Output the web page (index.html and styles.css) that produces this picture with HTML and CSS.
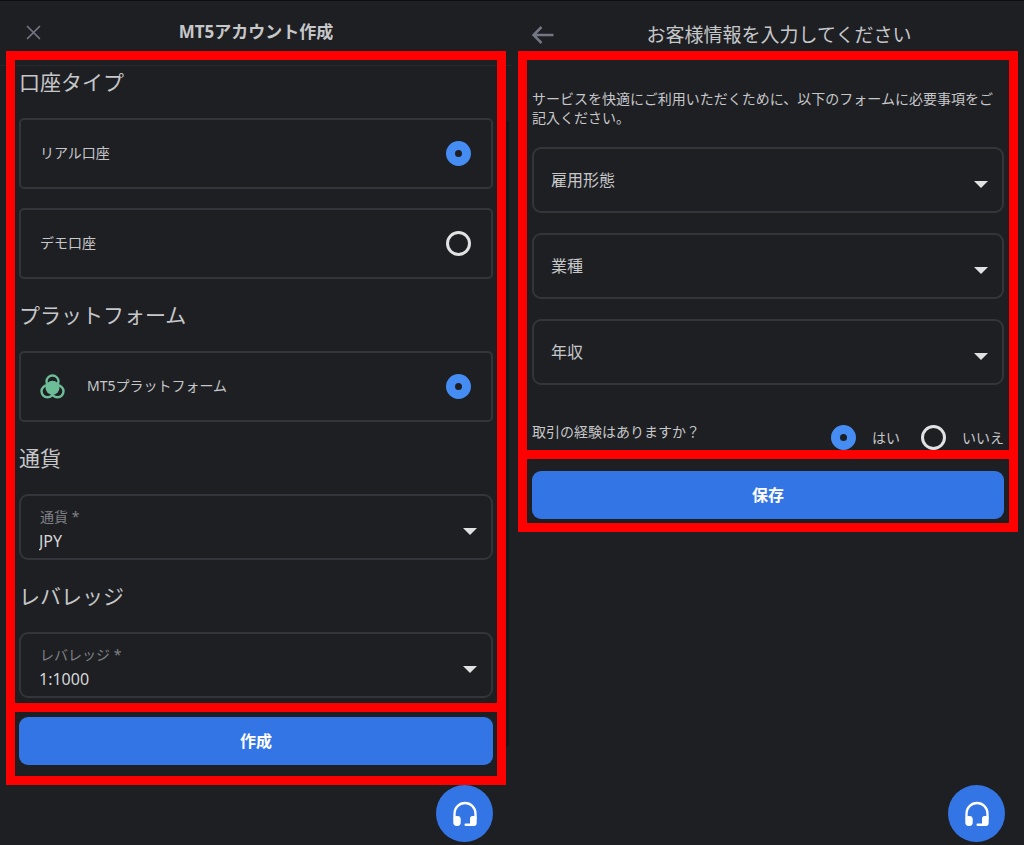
FILE: index.html
```html
<!DOCTYPE html>
<html lang="ja">
<head>
    <meta charset="UTF-8">
    <meta name="viewport" content="width=device-width, initial-scale=1.0">
    <title>MT5アカウント作成</title>
    <link rel="stylesheet" href="styles.css">
</head>
<body>
    <main class="screens">
        <!-- Account screen -->
        <section class="screen screen-account">
            <header class="screen-header header-account">
                <button type="button" class="icon-button" aria-label="閉じる">
                    <svg width="15" height="15" viewBox="0 0 15 15"><path d="M1.5 1.5L13.5 13.5M13.5 1.5L1.5 13.5" fill="none" stroke="#737684" stroke-width="1.7" stroke-linecap="round"/></svg>
                </button>
                <h1>MT5アカウント作成</h1>
            </header>

            <form>
                <div class="frame account-fields">
                    <h2>口座タイプ</h2>
                    <div class="card-list">
                        <label class="card">
                            <span>リアル口座</span>
                            <input type="radio" class="radio" name="account_type" value="real" checked>
                        </label>
                        <label class="card">
                            <span>デモ口座</span>
                            <input type="radio" class="radio" name="account_type" value="demo">
                        </label>
                    </div>

                    <h2>プラットフォーム</h2>
                    <label class="card">
                        <svg class="platform-icon" width="25" height="25" viewBox="0 0 25 25">
                            <g fill="none" stroke="#6dbd98" stroke-width="2.4">
                                <circle cx="12.5" cy="7.5" r="6"/>
                                <circle cx="7.5" cy="17.3" r="6"/>
                                <circle cx="17.5" cy="17.3" r="6"/>
                            </g>
                            <circle cx="12.5" cy="13.8" r="7" fill="#6dbd98"/>
                        </svg>
                        <span>MT5プラットフォーム</span>
                        <input type="radio" class="radio" name="platform" value="mt5" checked>
                    </label>

                    <h2>通貨</h2>
                    <div class="field field-filled">
                        <label for="currency">通貨 *</label>
                        <select id="currency" name="currency" required>
                            <option>JPY</option>
                        </select>
                    </div>

                    <h2>レバレッジ</h2>
                    <div class="field field-filled">
                        <label for="leverage">レバレッジ *</label>
                        <select id="leverage" name="leverage" required>
                            <option>1:1000</option>
                        </select>
                    </div>
                </div>
                <div class="frame frame-submit account-submit">
                    <button type="submit" class="submit-button">作成</button>
                </div>
            </form>

            <button type="button" class="support-button" aria-label="サポート">
                <svg width="26" height="26" viewBox="0 0 26 26">
                    <path d="M2.5 18V12.5a10.5 10.5 0 0 1 21 0V18" fill="none" stroke="#fff" stroke-width="2.3"/>
                    <rect x="1.3" y="15" width="7.4" height="10" rx="3.4" fill="#fff"/>
                    <path d="M20.5 15H23a1.7 1.7 0 0 1 1.7 2v5a3 3 0 0 1-3 3h-8a1 1 0 0 1 0-2.4H18V17.5a2.5 2.5 0 0 1 2.5-2.5z" fill="#fff"/>
                </svg>
            </button>
        </section>

        <!-- Customer information screen -->
        <section class="screen">
            <header class="screen-header header-profile">
                <button type="button" class="icon-button" aria-label="戻る">
                    <svg width="22" height="18" viewBox="0 0 22 18"><path d="M21.5 9H1.5M9.5 1L1.5 9L9.5 17" fill="none" stroke="#737684" stroke-width="2.5"/></svg>
                </button>
                <h1>お客様情報を入力してください</h1>
            </header>

            <form>
                <div class="frame profile-fields">
                    <p class="intro">サービスを快適にご利用いただくために、以下のフォームに必要事項をご記入ください。</p>
                    <div class="field-list">
                        <div class="field">
                            <label for="employment">雇用形態</label>
                            <select id="employment" name="employment">
                                <option value=""></option>
                            </select>
                        </div>
                        <div class="field">
                            <label for="industry">業種</label>
                            <select id="industry" name="industry">
                                <option value=""></option>
                            </select>
                        </div>
                        <div class="field">
                            <label for="income">年収</label>
                            <select id="income" name="income">
                                <option value=""></option>
                            </select>
                        </div>
                    </div>
                    <div class="question" role="radiogroup" aria-labelledby="experience-label">
                        <span id="experience-label">取引の経験はありますか？</span>
                        <div class="answers">
                            <label><input type="radio" class="radio" name="experience" value="yes" checked>はい</label>
                            <label><input type="radio" class="radio" name="experience" value="no">いいえ</label>
                        </div>
                    </div>
                </div>
                <div class="frame frame-submit profile-submit">
                    <button type="submit" class="submit-button">保存</button>
                </div>
            </form>

            <button type="button" class="support-button" aria-label="サポート">
                <svg width="26" height="26" viewBox="0 0 26 26">
                    <path d="M2.5 18V12.5a10.5 10.5 0 0 1 21 0V18" fill="none" stroke="#fff" stroke-width="2.3"/>
                    <rect x="1.3" y="15" width="7.4" height="10" rx="3.4" fill="#fff"/>
                    <path d="M20.5 15H23a1.7 1.7 0 0 1 1.7 2v5a3 3 0 0 1-3 3h-8a1 1 0 0 1 0-2.4H18V17.5a2.5 2.5 0 0 1 2.5-2.5z" fill="#fff"/>
                </svg>
            </button>
        </section>
    </main>
</body>
</html>
```

FILE: styles.css
```css
/* Global Styles */
* {
    box-sizing: border-box;
    margin: 0;
    padding: 0;
}

body {
    font-family: "Noto Sans", "Noto Sans CJK JP", sans-serif;
    font-size: 14px;
    background-color: #1e1f23;
    color: #c6c7c9;
}

button,
select {
    font-family: inherit;
    border: none;
    cursor: pointer;
}

.screens {
    display: grid;
    grid-template-columns: 1fr 1fr;
    min-height: 100vh;
    box-shadow: inset 0 1px #0c0d10;
}

.screen {
    display: flex;
    flex-direction: column;
    position: relative;
}

/* Scrollbar track */
.screen-account::after {
    content: "";
    position: absolute;
    top: 121px;
    bottom: 99px;
    right: 3px;
    width: 3px;
    background-color: #17181b;
}

/* Header Styles */
.screen-header {
    height: 66px;
    line-height: 24px;
}

.header-account {
    display: grid;
    grid-template-columns: 1fr auto 1fr;
    align-items: start;
    padding: 20px 26px 0;
    border-bottom: 1px solid #27282c;
}

.header-account h1 {
    font-size: 17px;
    font-weight: 700;
}

.header-profile {
    display: flex;
    align-items: flex-start;
    padding: 23px 20px 0;
}

.header-profile h1 {
    flex: 1;
    font-size: 19px;
    font-weight: 400;
    text-align: center;
}

.icon-button {
    display: flex;
    align-items: center;
    justify-self: start;
    height: 24px;
    background: none;
}

/* Red frames */
.frame {
    position: relative;
    margin: 0 6px;
    border: 9px solid #ff0000;
}

.account-fields {
    margin-top: -15px;
    padding: 0 4px 5px;
}

.profile-fields {
    margin-top: -15px;
    padding: 29px 5px 0;
}

.frame-submit {
    border-top: none;
}

.account-submit {
    padding: 5px 4px 11px;
}

.profile-submit {
    padding: 12px 5px 4px;
}

h2 {
    margin: 14px 0;
    font-size: 21px;
    font-weight: 400;
    line-height: 44px;
}

h2:first-child {
    margin-top: 0;
}

/* Radio cards */
.card-list {
    display: flex;
    flex-direction: column;
    gap: 19px;
}

.card {
    display: flex;
    align-items: center;
    height: 71px;
    padding: 0 20px 0 19px;
    border: 2px solid #34353a;
    border-radius: 5px;
}

.card span {
    padding-bottom: 3px;
}

.card .radio {
    margin-left: auto;
}

.platform-icon {
    margin-right: 22px;
}

.radio {
    appearance: none;
    width: 25px;
    height: 25px;
    border: 3px solid #e1e2e3;
    border-radius: 50%;
}

.radio:checked {
    border: 9px solid #458df3;
}

/* Select fields */
.field-list {
    display: flex;
    flex-direction: column;
    gap: 20px;
}

.field {
    position: relative;
}

.field select {
    appearance: none;
    display: block;
    width: 100%;
    height: 66px;
    padding: 0 40px 0 18px;
    background-color: transparent;
    border: 2px solid #34353a;
    border-radius: 9px;
    color: #d5d6d8;
    font-size: 16px;
}

.field label {
    position: absolute;
    top: 0;
    left: 19px;
    font-size: 16px;
    line-height: 66px;
    pointer-events: none;
}

.field-filled label {
    top: 12px;
    left: 21px;
    color: #808185;
    font-size: 14px;
    line-height: 22px;
}

.field-filled select {
    padding-top: 28px;
}

.field::after {
    content: "";
    position: absolute;
    top: 34px;
    right: 16px;
    border: 7px solid transparent;
    border-top-color: #e0e1e3;
    border-bottom: none;
    pointer-events: none;
}

/* Profile form */
.intro {
    margin-bottom: 20px;
    line-height: 19px;
}

.question {
    display: flex;
    justify-content: space-between;
    margin-top: 40px;
    line-height: 14px;
}

.answers {
    display: flex;
    gap: 21px;
}

.answers label {
    display: flex;
    align-items: center;
    gap: 16px;
}

/* Buttons */
.submit-button {
    display: block;
    width: 100%;
    height: 48px;
    padding-bottom: 2px;
    background-color: #3475e6;
    border-radius: 9px;
    color: #fff;
    font-size: 16px;
    font-weight: 700;
}

.support-button {
    display: flex;
    align-items: center;
    justify-content: center;
    width: 57px;
    height: 57px;
    margin: auto 19px 3px auto;
    background-color: #3475e6;
    border-radius: 50%;
}
```
